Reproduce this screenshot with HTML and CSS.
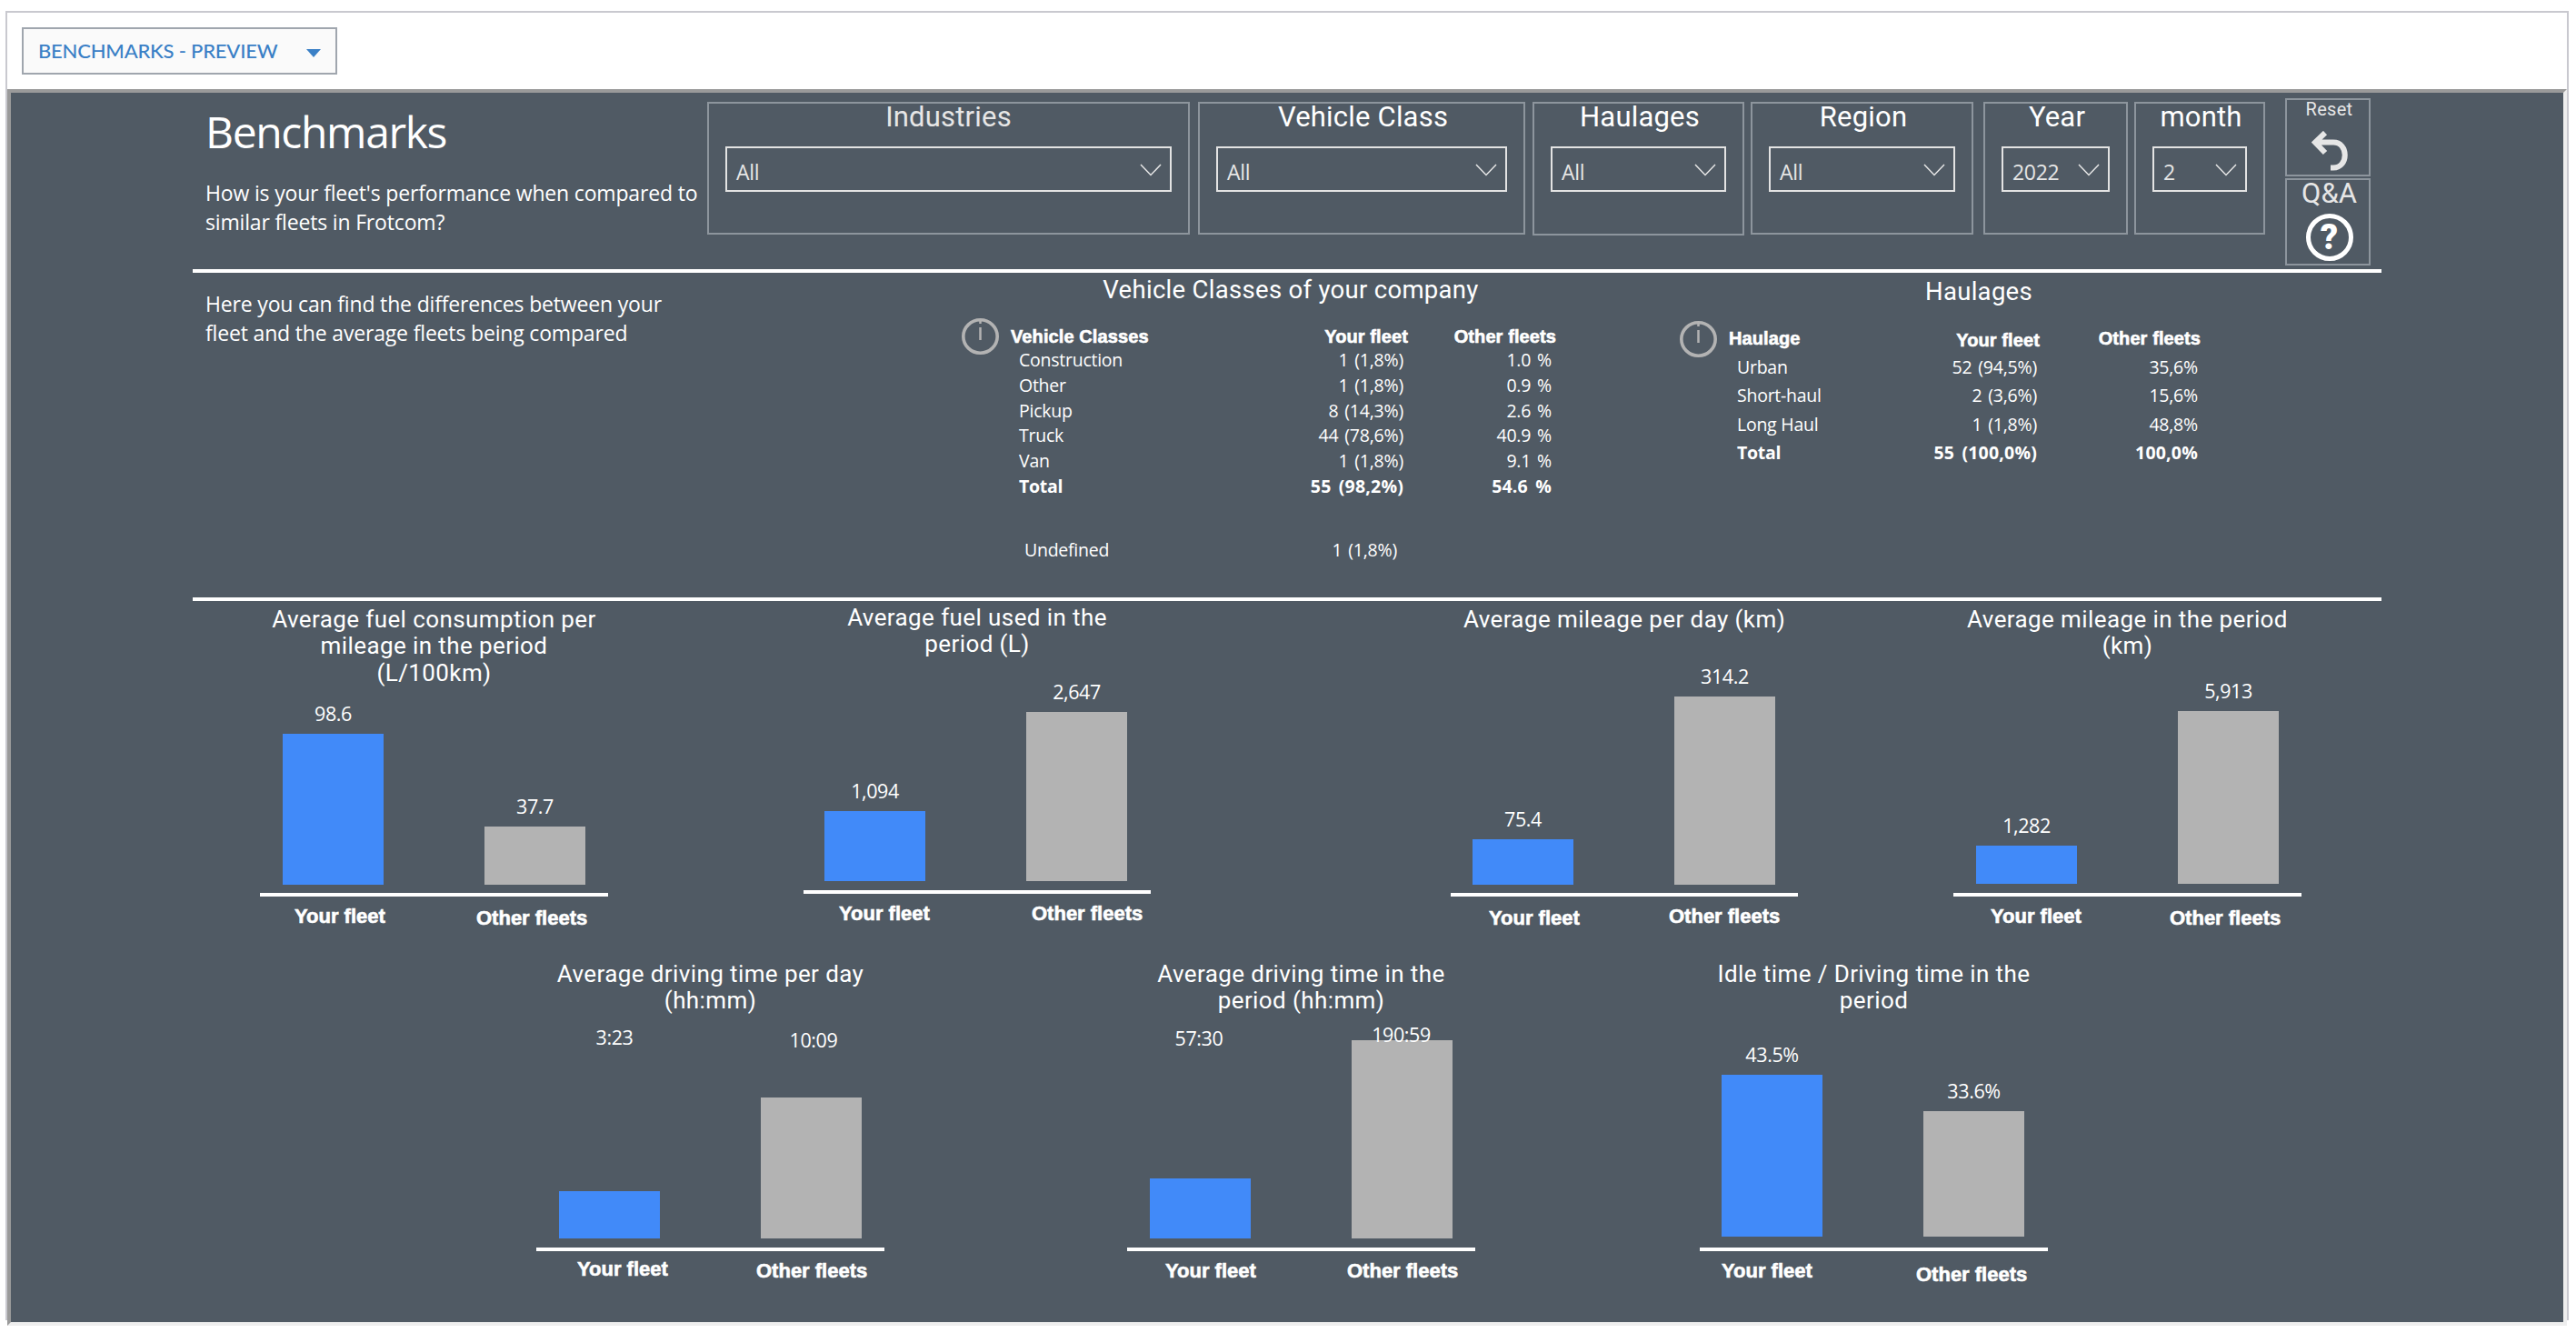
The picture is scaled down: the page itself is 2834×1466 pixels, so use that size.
FILE: index.html
```html
<!DOCTYPE html>
<html lang="en">

<head>
  <meta charset="UTF-8">
  <meta name="viewport" content="width=device-width, initial-scale=1.0">
  <title>Benchmarks</title>
  <link rel="stylesheet" href="styles.css">
</head>

<body>
  <div id="frame">
    <div id="toolbar">
      <button class="report-picker">
        <span>BENCHMARKS - PREVIEW</span>
        <svg class="caret" viewBox="0 0 16 9"><path d="M0 0h16l-8 9z" /></svg>
      </button>
    </div>

    <main id="report">
      <header class="report-header">
        <div class="intro">
          <h1>Benchmarks</h1>
          <p>How is your fleet's performance when compared to<br>similar fleets in Frotcom?</p>
        </div>

        <div class="filter industries">
          <h2>Industries</h2>
          <div class="select">All<svg viewBox="0 0 24 14"><path d="M1 1l11 11.500 11-11.500" /></svg></div>
        </div>
        <div class="filter vehicle-class">
          <h2>Vehicle Class</h2>
          <div class="select">All<svg viewBox="0 0 24 14"><path d="M1 1l11 11.500 11-11.500" /></svg></div>
        </div>
        <div class="filter haulages">
          <h2>Haulages</h2>
          <div class="select">All<svg viewBox="0 0 24 14"><path d="M1 1l11 11.500 11-11.500" /></svg></div>
        </div>
        <div class="filter region">
          <h2>Region</h2>
          <div class="select">All<svg viewBox="0 0 24 14"><path d="M1 1l11 11.500 11-11.500" /></svg></div>
        </div>
        <div class="filter year">
          <h2>Year</h2>
          <div class="select">2022<svg viewBox="0 0 24 14"><path d="M1 1l11 11.500 11-11.500" /></svg></div>
        </div>
        <div class="filter month">
          <h2>month</h2>
          <div class="select">2<svg viewBox="0 0 24 14"><path d="M1 1l11 11.500 11-11.500" /></svg></div>
        </div>

        <div class="actions">
          <div class="action reset">
            <span>Reset</span>
            <svg viewBox="0 0 40 44"><path d="M15 2L4 12.500 15 24M4 12.500H24C41 12.500 41 40.500 24 40.500H21" /></svg>
          </div>
          <div class="action qa">
            <span>Q&amp;A</span>
            <div class="question">?</div>
          </div>
        </div>
      </header>

      <section class="summary">
        <p class="summary-text">Here you can find the differences between your<br>fleet and the average fleets being compared</p>

        <div class="panel classes">
          <h3>Vehicle Classes of your company</h3>
          <div class="panel-body">
            <div class="info"><svg viewBox="0 0 41 40"><ellipse cx="20.500" cy="20" rx="18.700" ry="18.200" /><path d="M20.500 3v3M20.500 10v14" /></svg></div>
            <div class="rows">
              <div class="row head"><span>Vehicle Classes</span><span>Your fleet</span><span>Other fleets</span></div>
              <div class="row"><span>Construction</span><span>1 (1,8%)</span><span>1.0 %</span></div>
              <div class="row"><span>Other</span><span>1 (1,8%)</span><span>0.9 %</span></div>
              <div class="row"><span>Pickup</span><span>8 (14,3%)</span><span>2.6 %</span></div>
              <div class="row"><span>Truck</span><span>44 (78,6%)</span><span>40.9 %</span></div>
              <div class="row"><span>Van</span><span>1 (1,8%)</span><span>9.1 %</span></div>
              <div class="row total"><span>Total</span><span>55 (98,2%)</span><span>54.6 %</span></div>
              <div class="row undefined"><span>Undefined</span><span>1 (1,8%)</span></div>
            </div>
          </div>
        </div>

        <div class="panel hauls">
          <h3>Haulages</h3>
          <div class="panel-body">
            <div class="info"><svg viewBox="0 0 41 40"><ellipse cx="20.500" cy="20" rx="18.700" ry="18.200" /><path d="M20.500 3v3M20.500 10v14" /></svg></div>
            <div class="rows">
              <div class="row head"><span>Haulage</span><span>Your fleet</span><span>Other fleets</span></div>
              <div class="row"><span>Urban</span><span>52 (94,5%)</span><span>35,6%</span></div>
              <div class="row"><span>Short-haul</span><span>2 (3,6%)</span><span>15,6%</span></div>
              <div class="row"><span>Long Haul</span><span>1 (1,8%)</span><span>48,8%</span></div>
              <div class="row total"><span>Total</span><span>55 (100,0%)</span><span>100,0%</span></div>
            </div>
          </div>
        </div>
      </section>

      <section class="charts top">
        <div class="chart fuel-rate">
          <h4>Average fuel consumption per<br>mileage in the period<br>(L/100km)</h4>
          <div class="plot">
            <div class="col"><span>98.6</span><div class="bar yours" style="height: 166px"></div></div>
            <div class="col"><span>37.7</span><div class="bar others" style="height: 64px"></div></div>
          </div>
          <div class="labels"><span>Your fleet</span><span class="low">Other fleets</span></div>
        </div>

        <div class="chart fuel-used">
          <h4>Average fuel used in the<br>period (L)</h4>
          <div class="plot">
            <div class="col"><span>1,094</span><div class="bar yours" style="height: 77px"></div></div>
            <div class="col"><span>2,647</span><div class="bar others" style="height: 186px"></div></div>
          </div>
          <div class="labels"><span>Your fleet</span><span>Other fleets</span></div>
        </div>

        <div class="chart mileage-day">
          <h4>Average mileage per day (km)</h4>
          <div class="plot">
            <div class="col"><span>75.4</span><div class="bar yours" style="height: 50px"></div></div>
            <div class="col"><span>314.2</span><div class="bar others" style="height: 207px"></div></div>
          </div>
          <div class="labels"><span class="low">Your fleet</span><span>Other fleets</span></div>
        </div>

        <div class="chart mileage-period">
          <h4>Average mileage in the period<br>(km)</h4>
          <div class="plot">
            <div class="col"><span>1,282</span><div class="bar yours" style="height: 42px"></div></div>
            <div class="col"><span>5,913</span><div class="bar others" style="height: 190px"></div></div>
          </div>
          <div class="labels"><span>Your fleet</span><span class="low">Other fleets</span></div>
        </div>
      </section>

      <section class="charts bottom">
        <div class="chart driving-day">
          <h4>Average driving time per day<br>(hh:mm)</h4>
          <div class="plot">
            <div class="col"><span>3:23</span><div class="bar yours" style="height: 52px"></div></div>
            <div class="col"><span>10:09</span><div class="bar others" style="height: 155px"></div></div>
          </div>
          <div class="labels"><span>Your fleet</span><span class="low">Other fleets</span></div>
        </div>

        <div class="chart driving-period">
          <h4>Average driving time in the<br>period (hh:mm)</h4>
          <div class="plot">
            <div class="col"><span>57:30</span><div class="bar yours" style="height: 66px"></div></div>
            <div class="col"><span>190:59</span><div class="bar others" style="height: 218px"></div></div>
          </div>
          <div class="labels"><span class="low">Your fleet</span><span class="low">Other fleets</span></div>
        </div>

        <div class="chart idle">
          <h4>Idle time / Driving time in the<br>period</h4>
          <div class="plot">
            <div class="col"><span>43.5%</span><div class="bar yours" style="height: 178px"></div></div>
            <div class="col"><span>33.6%</span><div class="bar others" style="height: 138px"></div></div>
          </div>
          <div class="labels"><span class="low">Your fleet</span><span class="lower">Other fleets</span></div>
        </div>
      </section>
    </main>
  </div>
</body>

</html>
```

FILE: styles.css
```css
* {
  box-sizing: border-box;
}

body {
  margin: 0;
  height: 1466px;
  overflow: hidden;
  background-color: white;
  color: white;
  font-family: "Open Sans", "Noto Sans", sans-serif;
}

h1, h2, h3, h4, p {
  margin: 0;
  font-weight: 400;
}

h2, h3, h4, .action {
  font-family: Roboto, sans-serif;
}

#frame {
  width: 2820px;
  height: 1440px;
  margin: 12px 0 0 6px;
  border: 2px solid #c9c9cf;
  border-bottom: none;
}

#toolbar {
  height: 84px;
  padding: 16px;
}

.report-picker {
  display: flex;
  align-items: center;
  justify-content: space-between;
  width: 347px;
  height: 52px;
  padding: 0 16px 2px;
  border: 2px solid #a0a6ae;
  background-color: #fafafa;
  color: #3a80c6;
  font-family: Lato, sans-serif;
  font-size: 22px;
  font-weight: 500;
  letter-spacing: -0.2px;
  white-space: nowrap;
}

.caret {
  width: 16px;
  height: 9px;
  margin-top: 6px;
  fill: #3a80c6;
}

#report {
  height: 1360px;
  padding: 0 200px;
  border: 4px solid;
  border-color: #9a9a9a #eeeeee #eeeeee #9a9a9a;
  background-color: #505a64;
}

/* header with the filters */
.report-header {
  display: flex;
  align-items: flex-start;
  height: 198px;
  border-bottom: 4px solid white;
}

.intro {
  width: 566px;
  padding: 11px 0 0 14px;
  white-space: nowrap;
}

h1 {
  font-size: 48px;
  line-height: 64px;
  letter-spacing: -1.35px;
}

p {
  font-size: 23px;
  line-height: 31.5px;
  letter-spacing: -0.17px;
}

.intro p {
  margin-top: 20px;
}

.filter {
  height: 146px;
  margin-top: 10px;
  padding: 0 18px;
  border: 2px solid #8d959d;
}

.filter h2 {
  height: 47px;
  padding-left: 3px;
  font-size: 31px;
  line-height: 29px;
  letter-spacing: 0.2px;
  text-align: center;
  white-space: nowrap;
}

.industries { width: 531px; }
.vehicle-class { width: 360px; margin-left: 9px; }
.haulages { width: 233px; height: 147px; margin-left: 8px; }
.region { width: 245px; margin-left: 7px; }
.year { width: 159px; margin-left: 11px; }
.month { width: 144px; margin-left: 7px; }

.industries h2 {
  padding-left: 0;
  color: #e6e6e6;
}

.select {
  display: flex;
  align-items: center;
  justify-content: space-between;
  height: 50px;
  padding: 6px 9px 0 10px;
  border: 2px solid #e3e3e3;
  color: #e6e6e6;
  font-size: 23px;
  line-height: 34px;
  letter-spacing: -0.3px;
}

.select svg {
  width: 24px;
  height: 14px;
  margin-top: -5px;
  fill: none;
  stroke: #e6e6e6;
  stroke-width: 1.5;
}

.actions {
  display: flex;
  flex-direction: column;
  gap: 2px;
  margin: 6px 0 0 22px;
}

.action {
  display: flex;
  flex-direction: column;
  align-items: center;
  width: 94px;
  padding-left: 3px;
  border: 2px solid #8d959d;
  color: #e6e6e6;
}

.reset {
  height: 86px;
  font-size: 20px;
  line-height: 20px;
  letter-spacing: 0.3px;
}

.reset svg {
  width: 40px;
  height: 44px;
  margin-top: 14px;
  fill: none;
  stroke: #e6e6e6;
  stroke-width: 6;
}

.qa {
  height: 96px;
  font-size: 31px;
  line-height: 29px;
}

.question {
  width: 52px;
  height: 52px;
  margin-top: 8px;
  border: 5.500px solid white;
  border-radius: 50%;
  color: white;
  font-size: 38px;
  font-weight: 900;
  line-height: 43px;
  text-align: center;
}

/* comparison tables */
.summary {
  display: flex;
  height: 361px;
  border-bottom: 4px solid white;
}

.summary-text {
  width: 846px;
  padding: 19px 0 0 14px;
}

.panel h3 {
  font-size: 27.5px;
  line-height: 32px;
  letter-spacing: 0.3px;
  text-align: center;
}

.panel-body {
  display: flex;
  gap: 13px;
}

.info svg {
  width: 41px;
  height: 40px;
  fill: none;
  stroke: #b3b3b3;
  stroke-width: 3.6;
}

.info path {
  stroke-width: 2.5;
}

.classes {
  width: 654px;
  padding-top: 3px;
}

.classes h3 {
  padding-left: 70px;
}

.classes .info {
  margin-top: 15px;
}

.classes .rows {
  --row: 27.8px;
  --cols: 300px 137px 163px;
  margin-top: 23px;
}

.hauls {
  width: 573px;
  margin-left: 136px;
  padding-top: 5px;
}

.hauls h3 {
  padding-left: 85px;
}

.hauls .info {
  margin-top: 16px;
}

.hauls .rows {
  --row: 31.5px;
  --cols: 205px 137px 177px;
  margin-top: 23px;
}

.row {
  display: grid;
  grid-template-columns: var(--cols);
  padding-left: 9px;
  font-size: 19.5px;
  line-height: var(--row);
  letter-spacing: -0.25px;
  white-space: nowrap;
}

.row span + span {
  padding-right: 5px;
  letter-spacing: -0.2px;
  text-align: right;
  word-spacing: 2px;
}

/* rows are indented, numbers keep the header's right edge */
.row:not(.head) span + span {
  margin-left: -9px;
  margin-right: 9px;
}

.hauls .row span + span {
  padding-right: 3px;
}

.row.head {
  height: 24px;
  padding-left: 0;
  font-family: "Liberation Sans", Arial, sans-serif;
  font-size: 20px;
  font-weight: 700;
  line-height: 24px;
  letter-spacing: 0.1px;
  -webkit-text-stroke: 0.6px white;
}

.row.head span + span {
  padding-right: 0;
  letter-spacing: 0.1px;
  word-spacing: 0;
}

.hauls .row.head {
  height: 27.5px;
}

.hauls .head span:nth-child(2) {
  padding-top: 2px;
}

.total {
  font-weight: 700;
}

.total span + span {
  letter-spacing: 0.2px;
  word-spacing: 3px;
}

.undefined {
  margin-top: 42px;
  padding-left: 15px;
}

.undefined span:nth-child(2) {
  padding-right: 18px;
}

/* bar charts */
.charts {
  display: flex;
}

.charts.top {
  height: 396px;
  padding: 6px 0 0 74px;
}

.charts.bottom {
  padding-left: 378px;
}

.chart {
  --bars: 24px;
  --base: 10px;
  width: 383px;
}

.chart h4 {
  height: 88px;
  font-size: 26px;
  line-height: 29.3px;
  letter-spacing: 0.4px;
  text-align: center;
  white-space: nowrap;
}

.plot {
  display: flex;
  align-items: flex-end;
  gap: 111px;
  height: 231px;
  padding: 0 0 var(--base) var(--bars);
  border-bottom: 4px solid white;
}

.col {
  width: 111px;
  font-size: 21.5px;
  line-height: 24px;
  letter-spacing: -0.4px;
  text-align: center;
}

.col span {
  display: block;
  margin-bottom: 10px;
}

.yours { background-color: #418af9; }
.others { background-color: #b3b3b3; }

.labels {
  display: grid;
  grid-template-columns: var(--gap) auto;
  padding: 9px 0 0 var(--start);
  font-family: "Liberation Sans", Arial, sans-serif;
  font-size: 22px;
  font-weight: 700;
  line-height: 26px;
  white-space: nowrap;
  -webkit-text-stroke: 0.6px white;
}

.bottom .labels {
  padding-top: 7px;
}

.low { padding-top: 2px; }
.lower { padding-top: 6px; }

.fuel-rate { --bars: 25px; --base: 9px; --start: 38px; --gap: 200px; }
.fuel-used { --bars: 23px; --start: 39px; --gap: 212px; width: 382px; margin: -2px 0 0 215px; }
.mileage-day { --base: 9px; --start: 42px; --gap: 198px; width: 382px; margin-left: 330px; }
.mileage-period { --bars: 25px; --start: 41px; --gap: 197px; margin-left: 171px; }
.driving-day { --bars: 25px; --start: 45px; --gap: 197px; }
.driving-period { --bars: 25px; --start: 42px; --gap: 200px; margin-left: 267px; }
.idle { --base: 12px; --start: 24px; --gap: 214px; margin-left: 247px; }

.fuel-used h4 {
  height: 87px;
}

.driving-day .col:first-child span { margin: 0 0 157px 11px; }
.driving-day .col:last-child span { margin: 0 0 51px 5px; }
.driving-period .col:first-child span { margin: 0 0 142px -3px; }
.driving-period .col:last-child span { margin: 0 0 -6px -2px; }
```
